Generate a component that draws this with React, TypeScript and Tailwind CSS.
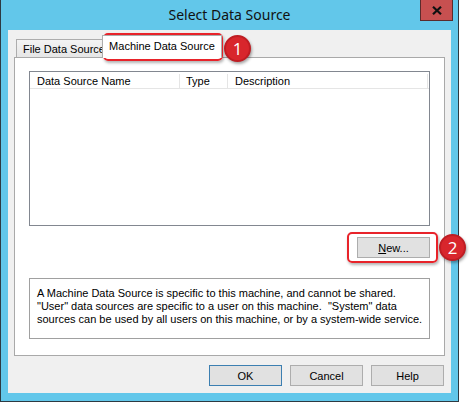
import React from "react";

function Marker({ n, className }: { n: string; className: string }) {
  return (
    <div
      className={`absolute w-[27px] h-[27px] rounded-full bg-[#d8262c] border-2 border-[#bf1d23] shadow-[1px_2px_3px_rgba(0,0,0,0.35)] flex items-center justify-center text-white text-[17px] leading-none font-['Open_Sans',sans-serif] ${className}`}
    >
      {n}
    </div>
  );
}

function Btn({ children, primary }: { children: React.ReactNode; primary?: boolean }) {
  return (
    <div
      className={`w-[73px] h-[21px] flex items-center justify-center bg-[#e1e1e1] border ${
        primary ? "border-[#3c7fb1]" : "border-[#adadad]"
      } text-[11px] text-black pt-px`}
    >
      {children}
    </div>
  );
}

export default function App() {
  return (
    <div className="relative w-[469px] h-[402px] bg-white font-['Liberation_Sans',Arial,sans-serif] text-black overflow-hidden">
      <div className="relative w-[459px] h-[402px] bg-[#62c7ea] border-x border-b border-[#2d3a42] flex flex-col px-[7px] pb-[8px]">
        {/* title bar */}
        <div className="h-[31px] flex items-center justify-center text-[14px] text-[#111] font-['Noto_Sans',sans-serif] pb-[1px]">
          Select Data Source
        </div>
        <div className="absolute top-0 right-[5px] w-[33px] h-[21px] bg-[#c75050] border-x border-b border-[#5b2b2b] flex items-center justify-center">
          <svg width="10" height="9" viewBox="0 0 10 9">
            <path d="M1 0.8 L9 8.2 M9 0.8 L1 8.2" stroke="#111" strokeWidth="2.2" />
          </svg>
        </div>

        {/* client area */}
        <div className="flex-1 bg-[#f0f0f0] flex flex-col px-[6px] pt-[5px] pb-[7px]">
          {/* tabs */}
          <div className="h-[22px] flex items-end pl-[2px]">
            <div className="h-[18px] w-[88px] pl-[6px] flex items-center bg-gradient-to-b from-[#f3f3f3] to-[#e6e6e6] border border-b-0 border-[#adadad] text-[11px] whitespace-nowrap overflow-hidden pt-px">
              File Data Source
            </div>
            <div className="relative z-10 -ml-[2px] -mb-px h-[23px] w-[120px] flex items-center justify-center bg-white border border-b-0 border-[#adadad] text-[11px] pb-[1px]">
              Machine Data Source
            </div>
          </div>

          {/* panel */}
          <div className="h-[299px] bg-white border border-[#a9a9a9] flex flex-col pl-[14px] pr-[14px] pt-[13px]">
            {/* list view */}
            <div className="h-[155px] border border-[#828790] bg-white flex flex-col">
              <div className="h-[17px] flex border-b border-[#e5e5e5] text-[11px] pt-[2px]">
                <div className="w-[150px] pl-[7px] flex items-center border-r border-[#e5e5e5]">Data Source Name</div>
                <div className="w-[48px] pl-[6px] flex items-center border-r border-[#e5e5e5]">Type</div>
                <div className="w-[200px] pl-[7px] flex items-center border-r border-[#e5e5e5]">Description</div>
              </div>
            </div>

            <div className="flex justify-end mt-[11px]">
              <Btn>
                <span>
                  <span className="underline">N</span>ew...
                </span>
              </Btn>
            </div>

            <div className="mt-[20px] h-[61px] border border-[#a0a0a0] pl-[7px] pt-[8px] text-[11px] leading-[13px]">
              <div>A Machine Data Source is specific to this machine, and cannot be shared.</div>
              <div>"User" data sources are specific to a user on this machine.&nbsp; "System" data</div>
              <div>sources can be used by all users on this machine, or by a system-wide service.</div>
            </div>
          </div>

          {/* bottom buttons */}
          <div className="mt-[9px] flex justify-end gap-[8px] pr-px">
            <Btn primary>OK</Btn>
            <Btn>Cancel</Btn>
            <Btn>Help</Btn>
          </div>
        </div>
      </div>

      {/* annotations */}
      <div className="absolute left-[103px] top-[33px] w-[120px] h-[28px] rounded-[5px] border-2 border-[#e8232a] shadow-[1px_2px_3px_rgba(0,0,0,0.3)]" />
      <Marker n="1" className="left-[224px] top-[35px]" />
      <div className="absolute left-[347px] top-[232px] w-[91px] h-[31px] rounded-[5px] border-2 border-[#e8232a] shadow-[1px_2px_3px_rgba(0,0,0,0.3)]" />
      <Marker n="2" className="left-[439px] top-[234px]" />
    </div>
  );
}
